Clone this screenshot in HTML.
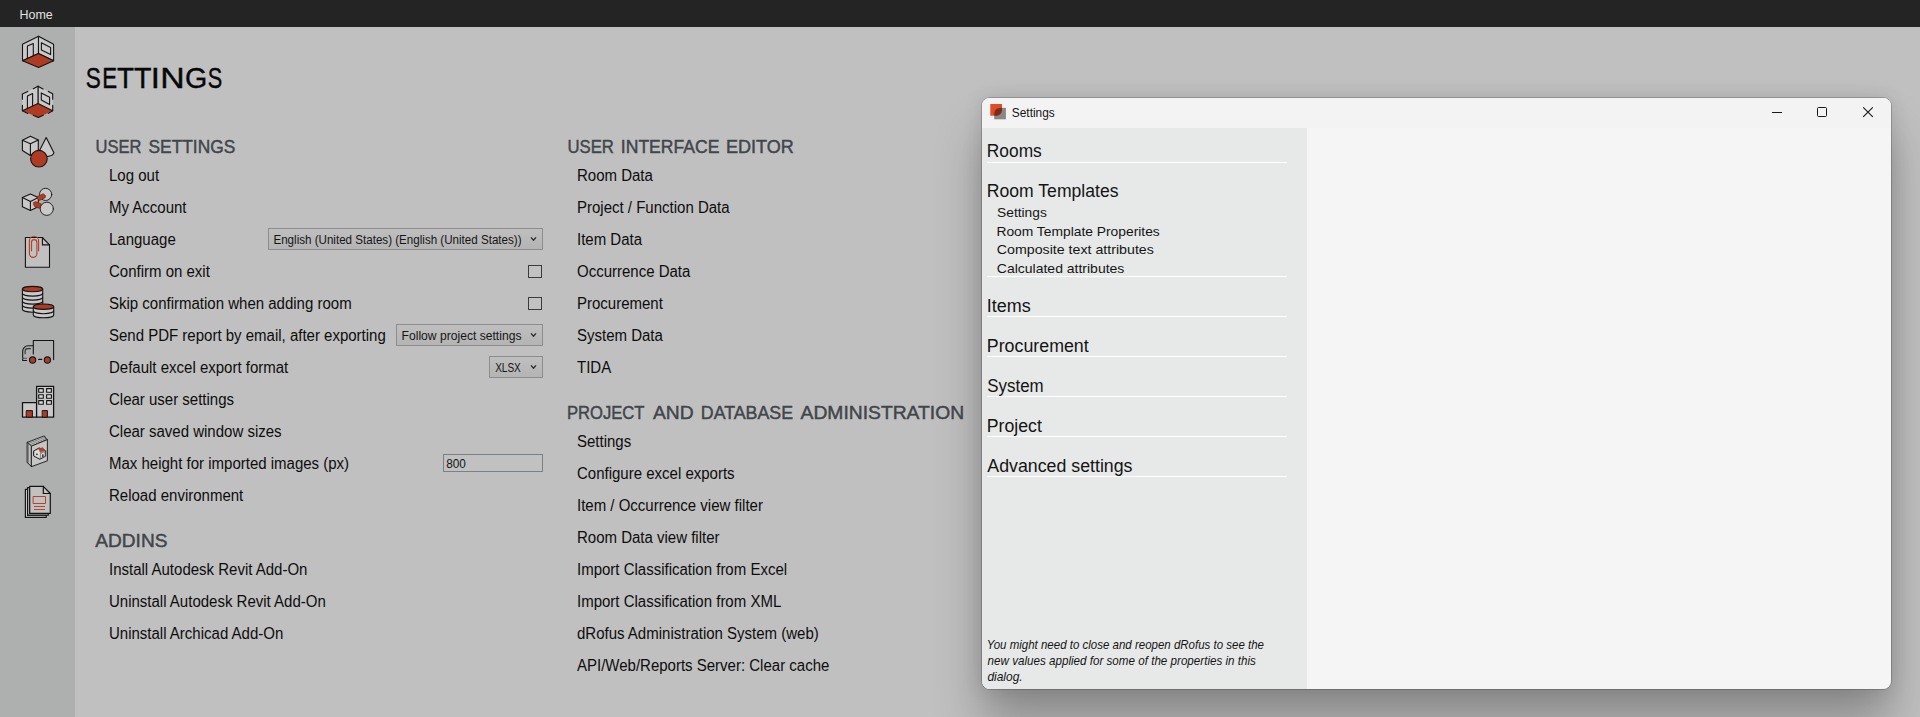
<!DOCTYPE html>
<html><head><meta charset="utf-8"><title>Settings</title>
<style>
html,body{margin:0;padding:0;}
body{width:1920px;height:717px;overflow:hidden;position:relative;background:#c0c0c0;font-family:"Liberation Sans",sans-serif;}
.t{position:absolute;white-space:nowrap;font-family:"Liberation Sans",sans-serif;transform-origin:0 0;}
#topbar{position:absolute;left:0;top:0;width:1920px;height:27px;background:#242424;}
#side{position:absolute;left:0;top:27px;width:75px;height:690px;background:#aeb0af;}
.combo{position:absolute;box-sizing:border-box;border:1px solid #8d8d8d;background:linear-gradient(#bfbfbf,#b4b4b4);}
.chk{position:absolute;box-sizing:border-box;border:1px solid #3c3c3c;background:#c2c2c2;width:14px;height:13px;}
.inp{position:absolute;box-sizing:border-box;border:1px solid #7b8087;background:#c1c1c1;}
#dlg{position:absolute;left:982px;top:98px;width:909px;height:591px;border-radius:8px;background:#f5f5f5;overflow:hidden;}
#dlgshadow{position:absolute;left:982px;top:98px;width:909px;height:591px;border-radius:8px;box-shadow:0 0 0 1px rgba(0,0,0,0.18),0 36px 48px rgba(0,0,0,0.27),0 0 20px rgba(0,0,0,0.12);}
#dtitle{position:absolute;left:0;top:0;width:909px;height:30px;background:#f3f3f3;}
#dleft{position:absolute;left:0;top:30px;width:325px;height:561px;background:#e7e9e8;}
.sep{position:absolute;left:987px;width:300px;height:1px;background:#fff;box-shadow:0 0 1px rgba(255,255,255,0.5);}
</style></head>
<body>
<div id="topbar"></div>
<div id="side"></div>
<svg style="position:absolute;left:0;top:0" width="75" height="717" viewBox="0 0 75 717" fill="none" stroke="#141414" stroke-width="1.1" stroke-linejoin="round" stroke-linecap="round">
<!-- icon1 room -->
<g>
<polygon points="22.5,44.3 38.5,36.3 38.5,53.4 22.5,60.8" fill="#c9c9c9"/>
<polygon points="38.5,36.3 53.6,44.3 53.6,60.8 38.5,53.4" fill="#c9c9c9"/>
<polygon points="22.5,60.8 38.5,53.4 53.6,60.8 38.6,67.5" fill="#ae3b22"/>
<polyline points="27.4,58.4 27.4,46.1 33.3,43.5 33.3,55.8"/>
<polygon points="41.4,42.8 50.6,47.6 50.6,54.6 41.4,49.9"/>
</g>
<!-- icon2 room dashed -->
<g>
<polygon points="22.4,94.1 38,86.2 38,103.4 22.4,110.8" fill="#c9c9c9" stroke="none"/>
<polygon points="38,86.2 52.7,93.8 52.7,110.8 38,103.4" fill="#c9c9c9" stroke="none"/>
<polygon points="22.4,110.8 38,103.4 52.7,110.8 38.3,117.5" fill="#ae3b22" stroke="none"/>
<polyline points="22.4,110.8 38,103.4 52.7,110.8"/>
<polyline points="33.3,88.8 38,86.2 43,89.1"/>
<polyline points="27.8,91.4 22.4,94.1 22.4,99.3"/>
<polyline points="22.4,105.2 22.4,110.8 27.8,113.4"/>
<polyline points="48.3,91.4 52.7,93.8 52.7,99.3"/>
<polyline points="52.7,105.2 52.7,110.8 48.3,113.4"/>
<polyline points="33.3,115.2 38.3,117.5 43.3,115.2"/>
<line x1="38.1" y1="86.2" x2="38.1" y2="103.4" stroke-width="1.3"/>
<polyline points="27.4,108.4 27.4,96.1 32.6,93.6 32.6,105.8"/>
<polygon points="41.3,92.9 49.6,97.3 49.6,104.6 41.3,99.9"/>
</g>
<!-- icon3 shapes -->
<g>
<path d="M46.2 137.6 L39.8 149.9 L47.4 156.6 Q53.6 155.6 53.9 152.8 Z" fill="#c9c9c9"/>
<polygon points="30.4,136.2 22.4,140.3 22.4,150.5 30.4,155.5 38.3,150.5 38.3,140" fill="#c9c9c9"/>
<polyline points="22.4,140.3 30.4,143.8 38.3,140"/>
<line x1="30.4" y1="143.8" x2="30.4" y2="155.5"/>
<circle cx="38.9" cy="158.7" r="8.3" fill="#ae3b22"/>
</g>
<!-- icon4 relations -->
<g>
<circle cx="45.65" cy="194.4" r="6.1" fill="#c9c9c9" stroke-width="0.9"/>
<circle cx="46.8" cy="208.8" r="6.6" fill="#c9c9c9" stroke-width="0.9"/>
<polygon points="30.4,194.1 22.4,197.6 22.4,206.7 30.4,210.5 38.3,206.7 38.3,197.6" fill="#c9c9c9"/>
<polyline points="22.4,197.6 30.4,201.4 38.3,197.6"/>
<line x1="30.4" y1="201.4" x2="30.4" y2="210.5"/>
<polygon points="37.2,196.5 43.2,193.7 45.6,195.6 45.2,197.7 39.2,200.5 37.4,198.4" fill="#b03c22" stroke="#5e2013" stroke-width="0.6" stroke-linejoin="miter"/>
<polygon points="33.6,202.4 35.6,201.6 41.3,203.9 39.7,208.4 35.0,207.0 33.6,204.8" fill="#b03c22" stroke="#5e2013" stroke-width="0.6" stroke-linejoin="miter"/>
</g>
<!-- icon5 paper clip -->
<g>
<path d="M25.4 237.5 H42.4 L49.5 244.9 V267.2 H25.4 Z" fill="#c1c1c1"/>
<path d="M42.4 237.5 V244.9 H49.5"/>
<path d="M38.6 250.8 V240.8 A4.6 4.6 0 0 0 29.4 240.8 V253.6 A3.75 3.75 0 0 0 36.9 253.6 V242.4 A2.7 2.7 0 0 0 31.5 242.4 V250.8" stroke="#b5432a" stroke-width="1.15"/>
</g>
<!-- icon6 database -->
<g>
<path d="M22.4 289.1 V309.3 A10.15 2.9 0 0 0 42.7 309.3 V289.1" fill="#c9c9c9"/>
<path d="M22.4 293.2 A10.15 2.9 0 0 0 42.7 293.2"/>
<path d="M22.4 297.2 A10.15 2.9 0 0 0 42.7 297.2"/>
<path d="M22.4 301.2 A10.15 2.9 0 0 0 42.7 301.2"/>
<path d="M22.4 305.2 A10.15 2.9 0 0 0 42.7 305.2"/>
<ellipse cx="32.55" cy="289.1" rx="10.15" ry="2.7" fill="#ae3b22"/>
<path d="M33.3 306.7 V314.9 A10.2 2.9 0 0 0 53.7 314.9 V306.7" fill="#c9c9c9"/>
<path d="M33.3 310.8 A10.2 2.9 0 0 0 53.7 310.8"/>
<ellipse cx="43.5" cy="306.7" rx="10.2" ry="2.7" fill="#ae3b22"/>
</g>
<!-- icon7 truck -->
<g>
<path d="M33.3 354 V340.5 H53.6 V359.6"/>
<path d="M33.3 345.7 H28.2 A5.5 5.5 0 0 0 22.7 351.2 V360.5 H26.6"/>
<path d="M22.8 358.3 H26.6" stroke="#555"/>
<path d="M30.4 348.6 H27.6 A2.5 2.5 0 0 0 25.1 351.1 V353.7" stroke="#333"/>
<line x1="38.6" y1="359.4" x2="41.8" y2="359.4"/>
<circle cx="32.6" cy="360" r="3.1" fill="#ae3b22"/>
<circle cx="47.4" cy="360" r="3.1" fill="#ae3b22"/>
</g>
<!-- icon8 buildings -->
<g stroke-width="1.3">
<rect x="22.5" y="402.6" width="14.1" height="14.6" fill="#c9c9c9"/>
<rect x="36.6" y="386.4" width="17" height="30.8" fill="#c9c9c9"/>
<rect x="38.7" y="388.6" width="4.6" height="3.7" fill="#dcdcdc" stroke-width="1.1"/>
<rect x="46.6" y="388.6" width="4.8" height="3.7" fill="#dcdcdc" stroke-width="1.1"/>
<rect x="38.7" y="394.7" width="4.6" height="3.6" fill="#dcdcdc" stroke-width="1.1"/>
<rect x="46.6" y="394.7" width="4.8" height="3.6" fill="#dcdcdc" stroke-width="1.1"/>
<rect x="38.7" y="400.6" width="4.6" height="3.7" fill="#dcdcdc" stroke-width="1.1"/>
<rect x="46.6" y="400.6" width="4.8" height="3.7" fill="#dcdcdc" stroke-width="1.1"/>
<rect x="26.6" y="410.6" width="5.8" height="6.6" fill="#ae3b22" stroke-width="1"/>
<rect x="42.6" y="410.6" width="4.8" height="6.6" fill="#ae3b22" stroke-width="1"/>
</g>
<!-- icon9 catalog -->
<g stroke-width="0.9">
<polygon points="27.4,442.3 43.4,436.2 44.8,436.2 45.3,438.2 47.4,439.5 31.6,446.1" fill="#cdcdcd"/>
<polygon points="27.4,442.3 31.6,446.1 31.6,466.6 27.4,462.8" fill="#c2c2c2"/>
<line x1="28.4" y1="443.6" x2="28.4" y2="463.4" stroke-width="0.5" stroke="#333"/>
<polygon points="31.6,446.1 47.4,439.6 47.4,460.8 31.6,466.6" fill="#c6c6c6"/>
<line x1="28.7" y1="443.4" x2="44.4" y2="437.4" stroke-width="0.5" stroke="#333"/>
<line x1="30.1" y1="444.7" x2="45.9" y2="438.6" stroke-width="0.5" stroke="#333"/>
<polygon points="33.9,450.8 39.2,447.9 45.7,450.8 45.7,456.1 39.8,459.3 33.9,456.1" fill="#8c8c8c" stroke="#262626" stroke-width="1"/>
<polygon points="34.5,451.3 38.6,449.2 40.0,452.4 39.7,458.5 34.5,455.7" fill="#dcdcdc" stroke="none"/>
<polygon points="38.2,448.8 42.7,447.3 45.2,450.2 40.5,452.1" fill="#b9401f" stroke="none"/>
<polygon points="40.4,452.5 45.2,450.7 45.2,455.8 40.1,458.6" fill="#8f8f8f" stroke="none"/>
<path d="M41.7 457.5 V454 L44 453.1 V456.4" stroke="#ececec" stroke-width="0.9" fill="none" stroke-linejoin="miter" stroke-linecap="butt"/>
<line x1="42.85" y1="454.6" x2="42.85" y2="457.1" stroke="#1c1c1c" stroke-width="1.1" stroke-linecap="butt"/>
<rect x="36.2" y="453.6" width="1.4" height="1.5" fill="#222" stroke="none"/>
</g>
<!-- icon10 documents -->
<g stroke-width="1.2">
<path d="M25.4 489.4 H27.6 V515.2 H46.2 V517.4 H25.4 Z" fill="#c9c9c9"/>
<path d="M27.6 487.6 H29.7 V513.4 H48.3 V515.2 H27.6 Z" fill="#c9c9c9"/>
<path d="M29.7 486.4 H43.3 L50.3 493.5 V513.4 H29.7 Z" fill="#c1c1c1"/>
<path d="M43.3 486.4 V493.5 H50.3"/>
<rect x="33.5" y="496.5" width="12" height="7" stroke="#b5432a" stroke-width="1"/>
<line x1="34" y1="506.5" x2="45" y2="506.5" stroke="#b5452c" stroke-width="1" stroke-linecap="butt"/>
<line x1="34" y1="509.5" x2="45" y2="509.5" stroke="#b5452c" stroke-width="1" stroke-linecap="butt"/>
</g>
</svg>

<div class="combo" style="left:268px;top:228px;width:275px;height:22px"></div>
<div class="combo" style="left:396px;top:324px;width:147px;height:22px"></div>
<div class="combo" style="left:489px;top:356px;width:54px;height:22px"></div>
<svg style="position:absolute;left:0;top:0;pointer-events:none" width="560" height="400" viewBox="0 0 560 400" fill="none" stroke="#2c2c2c" stroke-width="1.35">
<polyline points="531,237.4 533.5,240.2 536,237.4"/>
<polyline points="531,333.4 533.5,336.2 536,333.4"/>
<polyline points="531,365.4 533.5,368.2 536,365.4"/>
</svg>
<div class="chk" style="left:528px;top:265px"></div>
<div class="chk" style="left:528px;top:297px"></div>
<div class="inp" style="left:443px;top:454px;width:100px;height:18px"></div>
<div id="dlgshadow"></div>
<div id="dlg"><div id="dtitle"></div><div id="dleft"></div></div>
<!-- dialog icon -->
<svg style="position:absolute;left:988px;top:102px" width="20" height="20" viewBox="988 102 20 20">
<rect x="990.3" y="104" width="11.7" height="11.7" fill="#e14b26"/>
<rect x="994.2" y="107.9" width="11.7" height="11.4" fill="#8b8786"/>
<path d="M994 115.7 L994 107.7 L1002 107.7 C996.7 107.3 993.6 110.4 994 115.7 Z" fill="#e14b26"/>
<path d="M994.2 115.7 C993.6 110.4 996.7 107.3 1002 107.9 C1002.6 113.2 999.5 116.3 994.2 115.7 Z" fill="#7e2b19"/>
</svg>
<!-- window controls -->
<svg style="position:absolute;left:1760px;top:100px" width="125" height="26" viewBox="1760 100 125 26" fill="none" stroke="#1a1a1a" stroke-width="1">
<line x1="1772" y1="112.5" x2="1782" y2="112.5"/>
<rect x="1817.5" y="107.5" width="9" height="9" rx="1"/>
<path d="M1863.2 107.3 L1872.8 116.9 M1872.8 107.3 L1863.2 116.9" stroke-width="1.15"/>
</svg>
<div class="sep" style="top:162px"></div>
<div class="sep" style="top:276px"></div>
<div class="sep" style="top:316px"></div>
<div class="sep" style="top:356px"></div>
<div class="sep" style="top:396px"></div>
<div class="sep" style="top:436px"></div>
<div class="sep" style="top:476px"></div>
<div class="t" style="left:19.00px;top:6.00px;font-size:13.37px;line-height:17px;color:#e2e2e2;transform:translateX(0.53px) scaleX(0.9302);">Home</div>
<div class="t" style="left:85.00px;top:59.00px;font-size:29.07px;line-height:38px;color:#070707;-webkit-text-stroke:0.4px #070707;transform:translateX(0.79px) scaleX(0.7763);">S</div>
<div class="t" style="left:102.00px;top:59.00px;font-size:29.07px;line-height:38px;color:#070707;-webkit-text-stroke:0.4px #070707;transform:translateX(0.26px) scaleX(0.7674);">E</div>
<div class="t" style="left:117.00px;top:59.00px;font-size:29.07px;line-height:38px;color:#070707;-webkit-text-stroke:0.4px #070707;transform:translateX(0.06px) scaleX(0.9580);">T</div>
<div class="t" style="left:133.00px;top:59.00px;font-size:29.07px;line-height:38px;color:#070707;-webkit-text-stroke:0.4px #070707;transform:translateX(0.95px) scaleX(0.9818);">T</div>
<div class="t" style="left:150.00px;top:59.00px;font-size:29.07px;line-height:38px;color:#070707;-webkit-text-stroke:0.4px #070707;transform:translateX(0.73px) scaleX(1.1322);">I</div>
<div class="t" style="left:160.00px;top:59.00px;font-size:29.07px;line-height:38px;color:#070707;-webkit-text-stroke:0.4px #070707;transform:translateX(0.36px) scaleX(1.1619);">N</div>
<div class="t" style="left:185.00px;top:59.00px;font-size:29.07px;line-height:38px;color:#070707;-webkit-text-stroke:0.4px #070707;transform:translateX(0.06px) scaleX(0.9855);">G</div>
<div class="t" style="left:207.00px;top:59.00px;font-size:29.07px;line-height:38px;color:#070707;-webkit-text-stroke:0.4px #070707;transform:translateX(0.72px) scaleX(0.7474);">S</div>
<div class="t" style="left:95.00px;top:135.00px;font-size:18.75px;line-height:24px;color:#40454a;-webkit-text-stroke:0.45px #40454a;transform:translateX(0.46px) scaleX(0.8832);">USER</div>
<div class="t" style="left:148.00px;top:135.00px;font-size:18.75px;line-height:24px;color:#40454a;-webkit-text-stroke:0.45px #40454a;transform:translateX(0.56px) scaleX(0.9244);">SETTINGS</div>
<div class="t" style="left:567.00px;top:135.00px;font-size:18.75px;line-height:24px;color:#40454a;-webkit-text-stroke:0.45px #40454a;transform:translateX(0.46px) scaleX(0.8912);">USER</div>
<div class="t" style="left:620.00px;top:135.00px;font-size:18.75px;line-height:24px;color:#40454a;-webkit-text-stroke:0.45px #40454a;transform:translateX(0.83px) scaleX(0.9362);">INTERFACE</div>
<div class="t" style="left:725.00px;top:135.00px;font-size:18.75px;line-height:24px;color:#40454a;-webkit-text-stroke:0.45px #40454a;transform:translateX(0.99px) scaleX(0.9623);">EDITOR</div>
<div class="t" style="left:95.00px;top:529.00px;font-size:18.75px;line-height:24px;color:#40454a;-webkit-text-stroke:0.45px #40454a;transform:translateX(0.30px) scaleX(1.0178);">ADDINS</div>
<div class="t" style="left:567.00px;top:401.00px;font-size:18.75px;line-height:24px;color:#40454a;-webkit-text-stroke:0.45px #40454a;transform:translateX(0.00px) scaleX(0.8854);">PROJECT</div>
<div class="t" style="left:653.00px;top:401.00px;font-size:18.75px;line-height:24px;color:#40454a;-webkit-text-stroke:0.45px #40454a;transform:translateX(0.00px) scaleX(1.0273);">AND</div>
<div class="t" style="left:700.00px;top:401.00px;font-size:18.75px;line-height:24px;color:#40454a;-webkit-text-stroke:0.45px #40454a;transform:translateX(0.81px) scaleX(0.9485);">DATABASE</div>
<div class="t" style="left:800.00px;top:401.00px;font-size:18.75px;line-height:24px;color:#40454a;-webkit-text-stroke:0.45px #40454a;transform:translateX(0.60px) scaleX(1.0279);">ADMINISTRATION</div>
<div class="t" style="left:109.00px;top:165.00px;font-size:16px;line-height:21px;color:#0d0d0d;transform:translateX(0.00px) scaleX(0.9375);">Log out</div>
<div class="t" style="left:109.00px;top:197.00px;font-size:16px;line-height:21px;color:#0d0d0d;transform:translateX(0.00px) scaleX(0.9375);">My Account</div>
<div class="t" style="left:109.00px;top:229.00px;font-size:16px;line-height:21px;color:#0d0d0d;transform:translateX(0.00px) scaleX(0.9375);">Language</div>
<div class="t" style="left:109.00px;top:261.00px;font-size:16px;line-height:21px;color:#0d0d0d;transform:translateX(0.00px) scaleX(0.9375);">Confirm on exit</div>
<div class="t" style="left:109.00px;top:293.00px;font-size:16px;line-height:21px;color:#0d0d0d;transform:translateX(0.00px) scaleX(0.9375);">Skip confirmation when adding room</div>
<div class="t" style="left:109.00px;top:325.00px;font-size:16px;line-height:21px;color:#0d0d0d;transform:translateX(0.00px) scaleX(0.9375);">Send PDF report by email, after exporting</div>
<div class="t" style="left:109.00px;top:357.00px;font-size:16px;line-height:21px;color:#0d0d0d;transform:translateX(0.00px) scaleX(0.9375);">Default excel export format</div>
<div class="t" style="left:109.00px;top:389.00px;font-size:16px;line-height:21px;color:#0d0d0d;transform:translateX(0.00px) scaleX(0.9375);">Clear user settings</div>
<div class="t" style="left:109.00px;top:421.00px;font-size:16px;line-height:21px;color:#0d0d0d;transform:translateX(0.00px) scaleX(0.9375);">Clear saved window sizes</div>
<div class="t" style="left:109.00px;top:453.00px;font-size:16px;line-height:21px;color:#0d0d0d;transform:translateX(0.00px) scaleX(0.9375);">Max height for imported images (px)</div>
<div class="t" style="left:109.00px;top:485.00px;font-size:16px;line-height:21px;color:#0d0d0d;transform:translateX(0.00px) scaleX(0.9375);">Reload environment</div>
<div class="t" style="left:109.00px;top:559.00px;font-size:16px;line-height:21px;color:#0d0d0d;transform:translateX(0.00px) scaleX(0.9375);">Install Autodesk Revit Add-On</div>
<div class="t" style="left:109.00px;top:591.00px;font-size:16px;line-height:21px;color:#0d0d0d;transform:translateX(0.00px) scaleX(0.9375);">Uninstall Autodesk Revit Add-On</div>
<div class="t" style="left:109.00px;top:623.00px;font-size:16px;line-height:21px;color:#0d0d0d;transform:translateX(0.00px) scaleX(0.9375);">Uninstall Archicad Add-On</div>
<div class="t" style="left:577.00px;top:165.00px;font-size:16px;line-height:21px;color:#0d0d0d;transform:translateX(0.00px) scaleX(0.9375);">Room Data</div>
<div class="t" style="left:577.00px;top:197.00px;font-size:16px;line-height:21px;color:#0d0d0d;transform:translateX(0.00px) scaleX(0.9375);">Project / Function Data</div>
<div class="t" style="left:577.00px;top:229.00px;font-size:16px;line-height:21px;color:#0d0d0d;transform:translateX(0.00px) scaleX(0.9375);">Item Data</div>
<div class="t" style="left:577.00px;top:261.00px;font-size:16px;line-height:21px;color:#0d0d0d;transform:translateX(0.00px) scaleX(0.9375);">Occurrence Data</div>
<div class="t" style="left:577.00px;top:293.00px;font-size:16px;line-height:21px;color:#0d0d0d;transform:translateX(0.00px) scaleX(0.9375);">Procurement</div>
<div class="t" style="left:577.00px;top:325.00px;font-size:16px;line-height:21px;color:#0d0d0d;transform:translateX(0.00px) scaleX(0.9375);">System Data</div>
<div class="t" style="left:577.00px;top:357.00px;font-size:16px;line-height:21px;color:#0d0d0d;transform:translateX(0.00px) scaleX(0.9375);">TIDA</div>
<div class="t" style="left:577.00px;top:431.00px;font-size:16px;line-height:21px;color:#0d0d0d;transform:translateX(0.00px) scaleX(0.9375);">Settings</div>
<div class="t" style="left:577.00px;top:463.00px;font-size:16px;line-height:21px;color:#0d0d0d;transform:translateX(0.00px) scaleX(0.9375);">Configure excel exports</div>
<div class="t" style="left:577.00px;top:495.00px;font-size:16px;line-height:21px;color:#0d0d0d;transform:translateX(0.00px) scaleX(0.9375);">Item / Occurrence view filter</div>
<div class="t" style="left:577.00px;top:527.00px;font-size:16px;line-height:21px;color:#0d0d0d;transform:translateX(0.00px) scaleX(0.9375);">Room Data view filter</div>
<div class="t" style="left:577.00px;top:559.00px;font-size:16px;line-height:21px;color:#0d0d0d;transform:translateX(0.00px) scaleX(0.9375);">Import Classification from Excel</div>
<div class="t" style="left:577.00px;top:591.00px;font-size:16px;line-height:21px;color:#0d0d0d;transform:translateX(0.00px) scaleX(0.9375);">Import Classification from XML</div>
<div class="t" style="left:577.00px;top:623.00px;font-size:16px;line-height:21px;color:#0d0d0d;transform:translateX(0.00px) scaleX(0.9375);">dRofus Administration System (web)</div>
<div class="t" style="left:577.00px;top:655.00px;font-size:16px;line-height:21px;color:#0d0d0d;transform:translateX(0.00px) scaleX(0.9375);">API/Web/Reports Server: Clear cache</div>
<div class="t" style="left:273.00px;top:231.00px;font-size:13.08px;line-height:17px;color:#151515;transform:translateX(0.44px) scaleX(0.8866);">English (United States) (English (United States))</div>
<div class="t" style="left:401.00px;top:327.00px;font-size:13.08px;line-height:17px;color:#151515;transform:translateX(0.55px) scaleX(0.9268);">Follow project settings</div>
<div class="t" style="left:495.00px;top:359.00px;font-size:13.08px;line-height:17px;color:#151515;transform:translateX(0.14px) scaleX(0.7673);">XLSX</div>
<div class="t" style="left:446.00px;top:456.00px;font-size:12px;line-height:16px;color:#151515;transform:translateX(0.23px) scaleX(0.9820);">800</div>
<div class="t" style="left:1011.00px;top:104.00px;font-size:13.08px;line-height:17px;color:#141414;transform:translateX(0.83px) scaleX(0.9086);">Settings</div>
<div class="t" style="left:986.00px;top:138.00px;font-size:18.9px;line-height:25px;color:#141414;transform:translateX(0.85px) scaleX(0.9170);">Rooms</div>
<div class="t" style="left:986.00px;top:178.00px;font-size:18.9px;line-height:25px;color:#141414;transform:translateX(0.83px) scaleX(0.9310);">Room Templates</div>
<div class="t" style="left:997.00px;top:204.00px;font-size:13.37px;line-height:17px;color:#141414;transform:translateX(0.07px) scaleX(1.0300);">Settings</div>
<div class="t" style="left:996.00px;top:223.00px;font-size:13.37px;line-height:17px;color:#141414;transform:translateX(0.42px) scaleX(1.0343);">Room Template Properites</div>
<div class="t" style="left:996.00px;top:241.00px;font-size:13.37px;line-height:17px;color:#141414;transform:translateX(0.83px) scaleX(1.0624);">Composite text attributes</div>
<div class="t" style="left:996.00px;top:260.00px;font-size:13.37px;line-height:17px;color:#141414;transform:translateX(0.84px) scaleX(1.0468);">Calculated attributes</div>
<div class="t" style="left:986.00px;top:293.00px;font-size:18.9px;line-height:25px;color:#141414;transform:translateX(0.80px) scaleX(0.9515);">Items</div>
<div class="t" style="left:986.00px;top:333.00px;font-size:18.9px;line-height:25px;color:#141414;transform:translateX(0.81px) scaleX(0.9421);">Procurement</div>
<div class="t" style="left:987.00px;top:373.00px;font-size:18.9px;line-height:25px;color:#141414;transform:translateX(0.27px) scaleX(0.8951);">System</div>
<div class="t" style="left:986.00px;top:413.00px;font-size:18.9px;line-height:25px;color:#141414;transform:translateX(0.82px) scaleX(0.9354);">Project</div>
<div class="t" style="left:987.00px;top:453.00px;font-size:18.9px;line-height:25px;color:#141414;transform:translateX(0.30px) scaleX(0.9405);">Advanced settings</div>
<div class="t" style="left:986.00px;top:638.00px;font-size:11.92px;line-height:15px;color:#141414;font-style:italic;transform:translateX(0.67px) scaleX(0.9653);">You might need to close and reopen dRofus to see the</div>
<div class="t" style="left:987.00px;top:654.00px;font-size:11.92px;line-height:15px;color:#141414;font-style:italic;transform:translateX(0.57px) scaleX(0.9769);">new values applied for some of the properties in this</div>
<div class="t" style="left:987.00px;top:670.00px;font-size:11.92px;line-height:15px;color:#141414;font-style:italic;transform:translateX(0.38px) scaleX(1.0044);">dialog.</div>
</body></html>
